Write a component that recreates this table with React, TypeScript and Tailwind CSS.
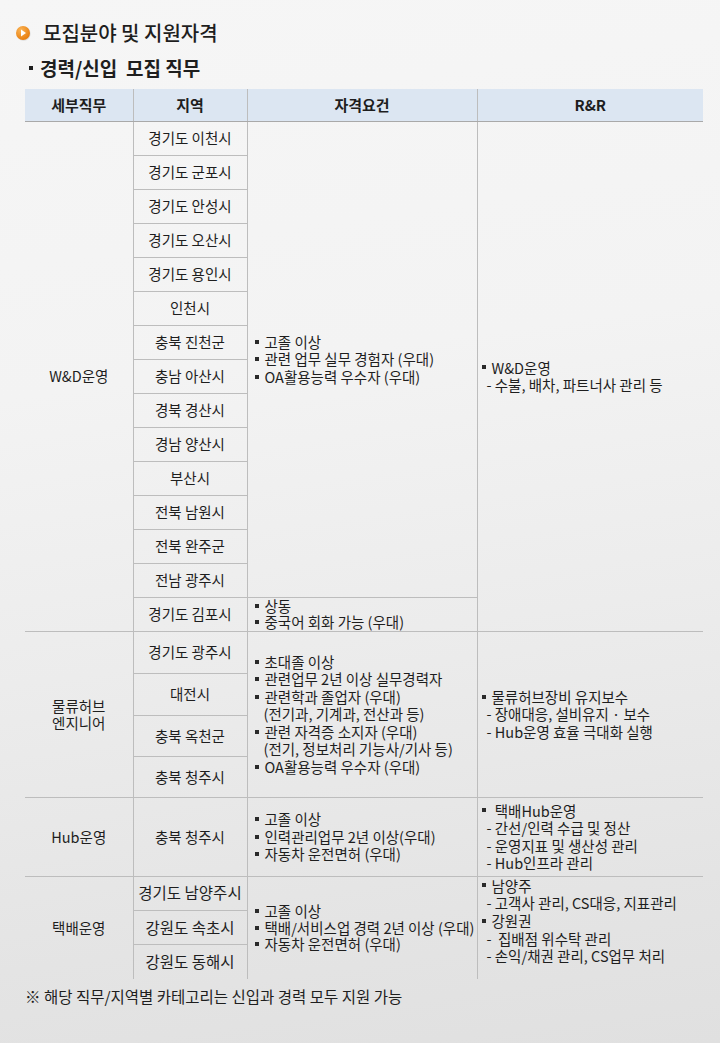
import React from "react";

const wdRegions = [
  "경기도 이천시",
  "경기도 군포시",
  "경기도 안성시",
  "경기도 오산시",
  "경기도 용인시",
  "인천시",
  "충북 진천군",
  "충남 아산시",
  "경북 경산시",
  "경남 양산시",
  "부산시",
  "전북 남원시",
  "전북 완주군",
  "전남 광주시",
  "경기도 김포시",
];

const hubRegions = ["경기도 광주시", "대전시", "충북 옥천군", "충북 청주시"];
const hubHeights = ["h-[42px]", "h-[42px]", "h-[41px]", "h-[41px]"];

const parcelRegions = ["경기도 남양주시", "강원도 속초시", "강원도 동해시"];

function Bullet({ children }: { children: React.ReactNode }) {
  return (
    <div className="flex items-center whitespace-nowrap">
      <span className="w-[4px] h-[4px] bg-[#2a2a2a] mr-[6px] shrink-0" />
      <span>{children}</span>
    </div>
  );
}

function Sub({ children }: { children: React.ReactNode }) {
  return <div className="pl-[9px] whitespace-nowrap">{children}</div>;
}

function Dash({ children }: { children: React.ReactNode }) {
  return <div className="pl-[5px] whitespace-nowrap">- {children}</div>;
}

const cell = "border border-[#bdbdbd] align-middle p-0";
const center = "text-center";

export default function App() {
  return (
    <div className="w-[720px] h-[1043px] bg-[linear-gradient(172deg,#f6f6f6_0%,#f3f3f3_35%,#ececec_60%,#e4e4e4_85%,#e0e0e0_100%)] pt-[21px] text-[#1e1e1e] font-['Noto_Sans_CJK_KR','Noto_Sans',sans-serif]">
      {/* section title */}
      <div className="flex items-center h-[24px] pl-[15px]">
        <svg width="16" height="16" viewBox="0 0 16 16" className="shrink-0">
          <defs>
            <radialGradient id="og" cx="35%" cy="30%" r="75%">
              <stop offset="0%" stopColor="#fbb455" />
              <stop offset="100%" stopColor="#e77b0a" />
            </radialGradient>
          </defs>
          <circle cx="8.6" cy="8.8" r="7" fill="#c9c9c9" opacity="0.6" />
          <circle cx="8" cy="8" r="7" fill="url(#og)" />
          <path d="M6 4.6 L11 8 L6 11.4 Z" fill="#ffffff" />
        </svg>
        <h1 className="ml-[12px] text-[20px] font-medium leading-[24px]">
          모집분야 및 지원자격
        </h1>
      </div>

      <div className="flex items-center h-[24px] mt-[11px] pl-[29px]">
        <span className="w-[4px] h-[4px] bg-[#1e1e1e] mr-[7px]" />
        <h2 className="text-[19px] font-bold leading-[24px] whitespace-pre">
          경력/신입  모집 직무
        </h2>
      </div>

      <table className="ml-[25px] mt-[9px] w-[678px] table-fixed border-collapse border-hidden text-[14.5px] leading-[17.5px]">
        <colgroup>
          <col className="w-[108px]" />
          <col className="w-[114px]" />
          <col className="w-[230px]" />
          <col className="w-[226px]" />
        </colgroup>
        <thead>
          <tr className="h-[32px] bg-[#dce6f2] text-[15px] font-bold">
            <th className="border-t-2 border-t-[#a3a3a3] border-b border-b-[#a9a9a9] border-r border-r-[#bdbdbd]">
              세부직무
            </th>
            <th className="border-t-2 border-t-[#a3a3a3] border-b border-b-[#a9a9a9] border-r border-r-[#bdbdbd]">
              지역
            </th>
            <th className="border-t-2 border-t-[#a3a3a3] border-b border-b-[#a9a9a9] border-r border-r-[#bdbdbd]">
              자격요건
            </th>
            <th className="border-t-2 border-t-[#a3a3a3] border-b border-b-[#a9a9a9]">
              R&amp;R
            </th>
          </tr>
        </thead>
        <tbody>
          {/* W&D운영 */}
          {wdRegions.map((r, i) => (
            <tr key={r} className="h-[34px]">
              {i === 0 && (
                <td rowSpan={15} className={`${cell} ${center}`}>
                  W&amp;D운영
                </td>
              )}
              <td className={`${cell} ${center}`}>{r}</td>
              {i === 0 && (
                <td rowSpan={14} className={`${cell} pl-[7px]`}>
                  <Bullet>고졸 이상</Bullet>
                  <Bullet>관련 업무 실무 경험자 (우대)</Bullet>
                  <Bullet>OA활용능력 우수자 (우대)</Bullet>
                </td>
              )}
              {i === 14 && (
                <td className={`${cell} pl-[7px] leading-[16px]`}>
                  <Bullet>상동</Bullet>
                  <Bullet>중국어 회화 가능 (우대)</Bullet>
                </td>
              )}
              {i === 0 && (
                <td rowSpan={15} className={`${cell} pl-[4px]`}>
                  <Bullet>W&amp;D운영</Bullet>
                  <Dash>수불, 배차, 파트너사 관리 등</Dash>
                </td>
              )}
            </tr>
          ))}

          {/* 물류허브 엔지니어 */}
          {hubRegions.map((r, i) => (
            <tr key={r} className={hubHeights[i]}>
              {i === 0 && (
                <td rowSpan={4} className={`${cell} ${center}`}>
                  물류허브
                  <br />
                  엔지니어
                </td>
              )}
              <td className={`${cell} ${center}`}>{r}</td>
              {i === 0 && (
                <td rowSpan={4} className={`${cell} pl-[7px]`}>
                  <Bullet>초대졸 이상</Bullet>
                  <Bullet>관련업무 2년 이상 실무경력자</Bullet>
                  <Bullet>관련학과 졸업자 (우대)</Bullet>
                  <Sub>(전기과, 기계과, 전산과 등)</Sub>
                  <Bullet>관련 자격증 소지자 (우대)</Bullet>
                  <Sub>(전기, 정보처리 기능사/기사 등)</Sub>
                  <Bullet>OA활용능력 우수자 (우대)</Bullet>
                </td>
              )}
              {i === 0 && (
                <td rowSpan={4} className={`${cell} pl-[4px]`}>
                  <Bullet>물류허브장비 유지보수</Bullet>
                  <Dash>장애대응, 설비유지 · 보수</Dash>
                  <Dash>Hub운영 효율 극대화 실행</Dash>
                </td>
              )}
            </tr>
          ))}

          {/* Hub운영 */}
          <tr className="h-[79px]">
            <td className={`${cell} ${center}`}>Hub운영</td>
            <td className={`${cell} ${center}`}>충북 청주시</td>
            <td className={`${cell} pl-[7px]`}>
              <Bullet>고졸 이상</Bullet>
              <Bullet>인력관리업무 2년 이상(우대)</Bullet>
              <Bullet>자동차 운전면허 (우대)</Bullet>
            </td>
            <td className={`${cell} pl-[4px]`}>
              <Bullet>&nbsp;택배Hub운영</Bullet>
              <Dash>간선/인력 수급 및 정산</Dash>
              <Dash>운영지표 및 생산성 관리</Dash>
              <Dash>Hub인프라 관리</Dash>
            </td>
          </tr>

          {/* 택배운영 */}
          {parcelRegions.map((r, i) => (
            <tr key={r} className="h-[34px]">
              {i === 0 && (
                <td rowSpan={3} className={`${cell} ${center}`}>
                  택배운영
                </td>
              )}
              <td className={`${cell} ${center} text-[15.5px] whitespace-nowrap`}>{r}</td>
              {i === 0 && (
                <td rowSpan={3} className={`${cell} pl-[7px] leading-[16.5px]`}>
                  <Bullet>고졸 이상</Bullet>
                  <Bullet>택배/서비스업 경력 2년 이상 (우대)</Bullet>
                  <Bullet>자동차 운전면허 (우대)</Bullet>
                </td>
              )}
              {i === 0 && (
                <td rowSpan={3} className={`${cell} pl-[4px] pb-[14px] leading-[17.7px]`}>
                  <Bullet>남양주</Bullet>
                  <Dash>고객사 관리, CS대응, 지표관리</Dash>
                  <Bullet>강원권</Bullet>
                  <Dash>&nbsp;집배점 위수탁 관리</Dash>
                  <Dash>손익/채권 관리, CS업무 처리</Dash>
                </td>
              )}
            </tr>
          ))}
        </tbody>
      </table>

      <p className="ml-[25px] mt-[7px] text-[15.5px] leading-[20px]">
        ※ 해당 직무/지역별 카테고리는 신입과 경력 모두 지원 가능
      </p>
    </div>
  );
}
